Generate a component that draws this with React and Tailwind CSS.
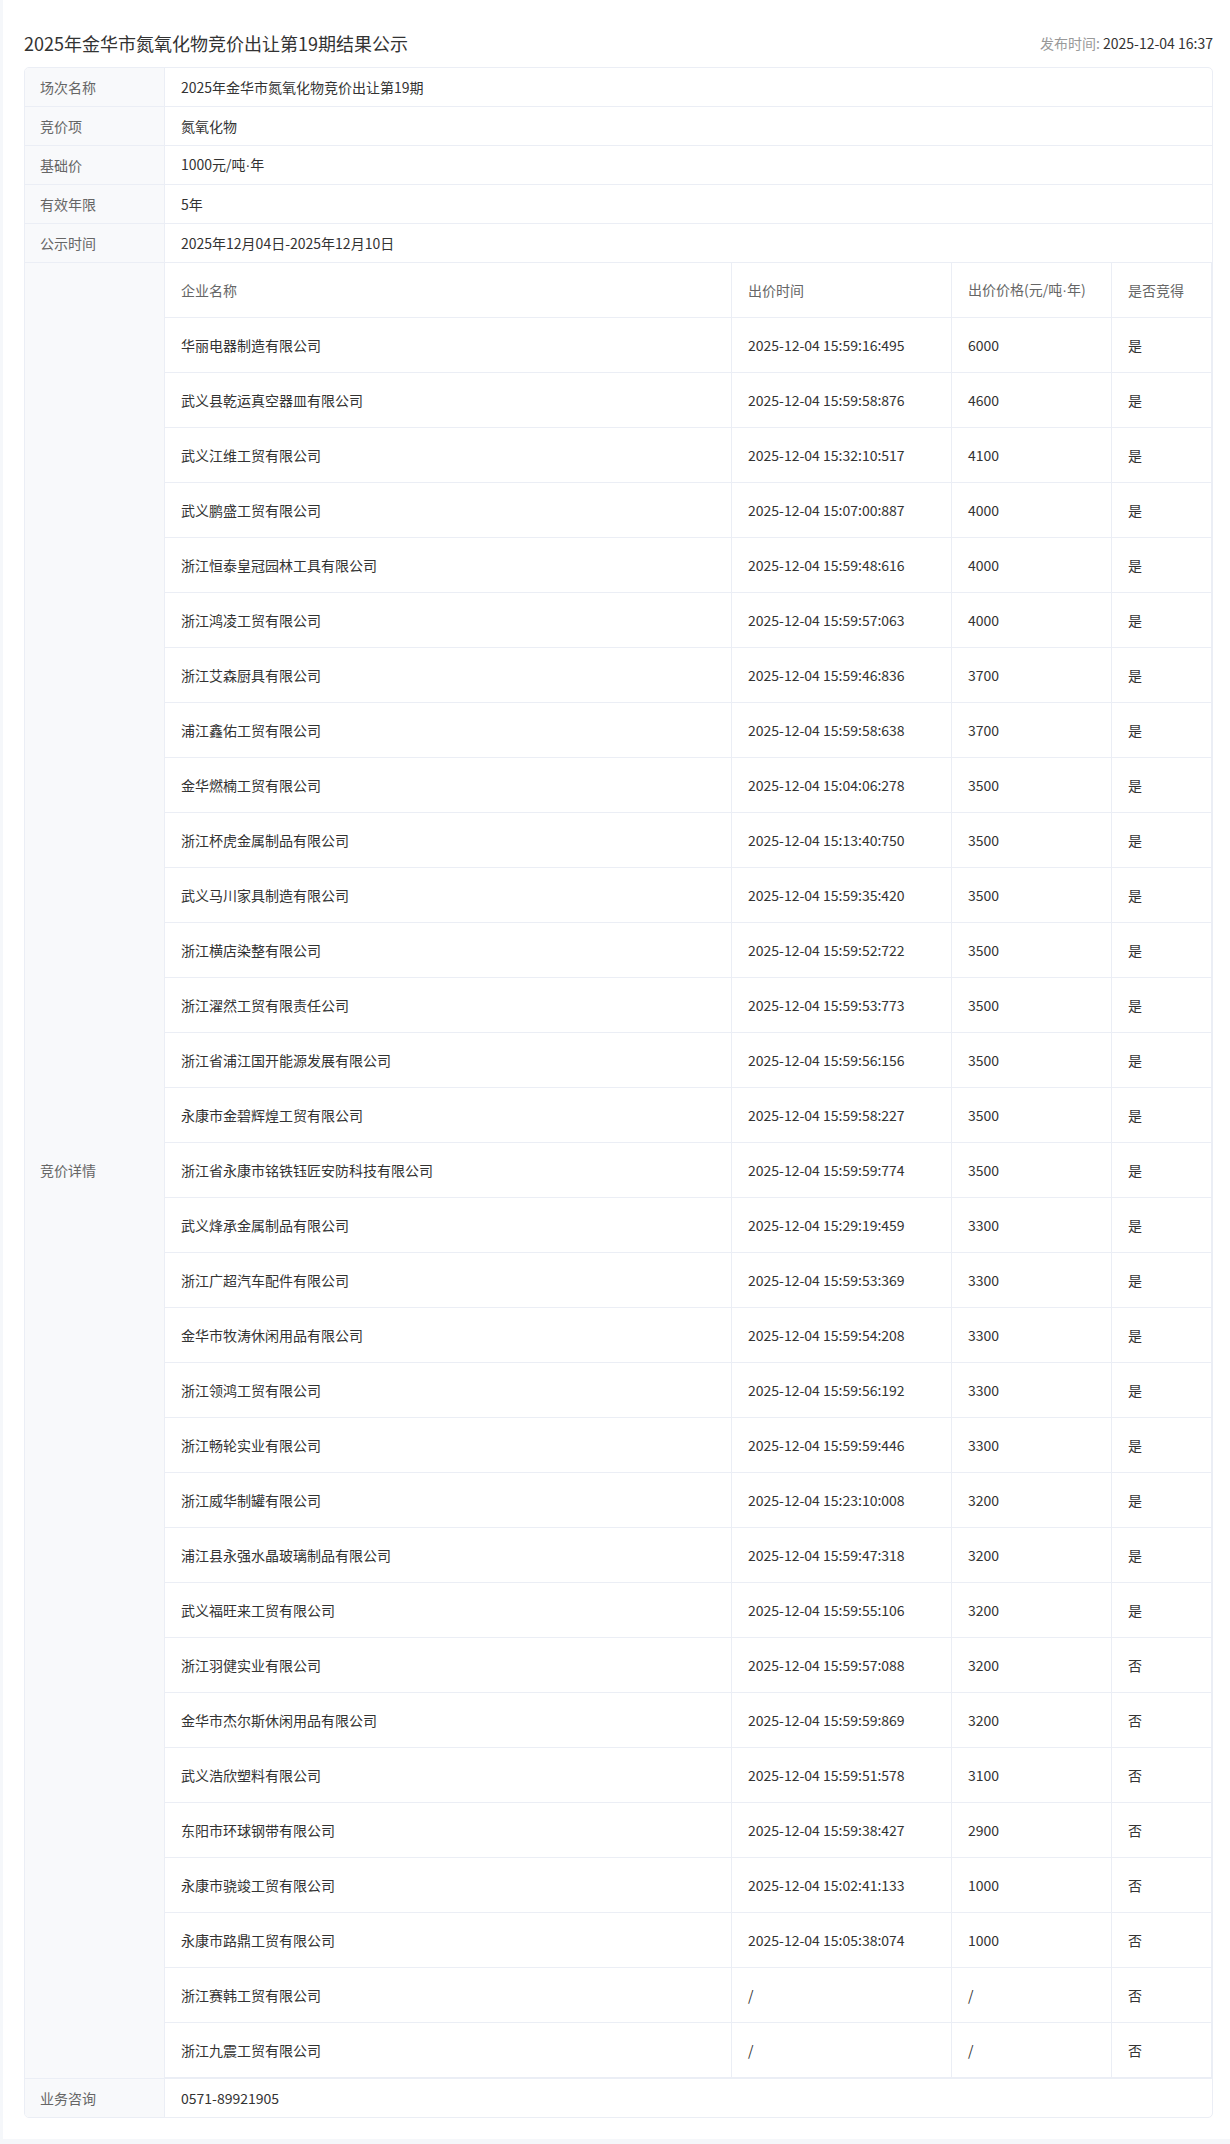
const bids = [
  ['华丽电器制造有限公司', '2025-12-04 15:59:16:495', '6000', '是'],
  ['武义县乾运真空器皿有限公司', '2025-12-04 15:59:58:876', '4600', '是'],
  ['武义江维工贸有限公司', '2025-12-04 15:32:10:517', '4100', '是'],
  ['武义鹏盛工贸有限公司', '2025-12-04 15:07:00:887', '4000', '是'],
  ['浙江恒泰皇冠园林工具有限公司', '2025-12-04 15:59:48:616', '4000', '是'],
  ['浙江鸿凌工贸有限公司', '2025-12-04 15:59:57:063', '4000', '是'],
  ['浙江艾森厨具有限公司', '2025-12-04 15:59:46:836', '3700', '是'],
  ['浦江鑫佑工贸有限公司', '2025-12-04 15:59:58:638', '3700', '是'],
  ['金华燃楠工贸有限公司', '2025-12-04 15:04:06:278', '3500', '是'],
  ['浙江杯虎金属制品有限公司', '2025-12-04 15:13:40:750', '3500', '是'],
  ['武义马川家具制造有限公司', '2025-12-04 15:59:35:420', '3500', '是'],
  ['浙江横店染整有限公司', '2025-12-04 15:59:52:722', '3500', '是'],
  ['浙江濯然工贸有限责任公司', '2025-12-04 15:59:53:773', '3500', '是'],
  ['浙江省浦江国开能源发展有限公司', '2025-12-04 15:59:56:156', '3500', '是'],
  ['永康市金碧辉煌工贸有限公司', '2025-12-04 15:59:58:227', '3500', '是'],
  ['浙江省永康市铭铁钰匠安防科技有限公司', '2025-12-04 15:59:59:774', '3500', '是'],
  ['武义烽承金属制品有限公司', '2025-12-04 15:29:19:459', '3300', '是'],
  ['浙江广超汽车配件有限公司', '2025-12-04 15:59:53:369', '3300', '是'],
  ['金华市牧涛休闲用品有限公司', '2025-12-04 15:59:54:208', '3300', '是'],
  ['浙江领鸿工贸有限公司', '2025-12-04 15:59:56:192', '3300', '是'],
  ['浙江畅轮实业有限公司', '2025-12-04 15:59:59:446', '3300', '是'],
  ['浙江威华制罐有限公司', '2025-12-04 15:23:10:008', '3200', '是'],
  ['浦江县永强水晶玻璃制品有限公司', '2025-12-04 15:59:47:318', '3200', '是'],
  ['武义福旺来工贸有限公司', '2025-12-04 15:59:55:106', '3200', '是'],
  ['浙江羽健实业有限公司', '2025-12-04 15:59:57:088', '3200', '否'],
  ['金华市杰尔斯休闲用品有限公司', '2025-12-04 15:59:59:869', '3200', '否'],
  ['武义浩欣塑料有限公司', '2025-12-04 15:59:51:578', '3100', '否'],
  ['东阳市环球钢带有限公司', '2025-12-04 15:59:38:427', '2900', '否'],
  ['永康市骁竣工贸有限公司', '2025-12-04 15:02:41:133', '1000', '否'],
  ['永康市路鼎工贸有限公司', '2025-12-04 15:05:38:074', '1000', '否'],
  ['浙江赛韩工贸有限公司', '/', '/', '否'],
  ['浙江九震工贸有限公司', '/', '/', '否'],
];

// narrow middle dot, the CJK font draws it full width
const Dot = () => <span className="font-['Liberation_Sans']">·</span>;

const info = [
  ['场次名称', '2025年金华市氮氧化物竞价出让第19期'],
  ['竞价项', '氮氧化物'],
  ['基础价', <>1000元/吨<Dot />年</>],
  ['有效年限', '5年'],
  ['公示时间', '2025年12月04日-2025年12月10日'],
];

function InfoRow({ label, children }) {
  return (
    <div className="grid grid-cols-[140px_1fr] border-b border-[#ebeef5]">
      <div className="flex items-center h-[38px] pl-[15px] bg-[#f8f9fb] border-r border-[#ebeef5] text-[#666]">
        {label}
      </div>
      <div className="flex items-center h-[38px] pl-[16px] text-[#333]">{children}</div>
    </div>
  );
}

function BidTable() {
  const cols = 'grid grid-cols-[567px_220px_160px_1fr] border-b border-[#ebeef5]';
  const cell = 'flex items-center h-[54px] pl-[16px] border-r border-[#ebeef5]';
  return (
    <div>
      <div className={cols}>
        <div className={`${cell} text-[#666]`}>企业名称</div>
        <div className={`${cell} text-[#666]`}>出价时间</div>
        <div className={`${cell} text-[#666]`}>
          <span>出价价格(元/吨<Dot />年)</span>
        </div>
        <div className={`${cell} text-[#666]`}>是否竞得</div>
      </div>
      {bids.map((b, i) => (
        <div key={i} className={cols}>
          <div className={`${cell} text-[#333]`}>{b[0]}</div>
          <div className={`${cell} text-[#333]`}>{b[1]}</div>
          <div className={`${cell} text-[#333]`}>{b[2]}</div>
          <div className={`${cell} text-[#333]`}>{b[3]}</div>
        </div>
      ))}
    </div>
  );
}

export default function App() {
  return (
    <div
      className="bg-[#f5f7fa] pl-[3px] pb-[6px] text-[14px]"
      style={{ fontFamily: '"Noto Sans CJK SC", "Noto Sans", sans-serif' }}
    >
      <div className="bg-white pl-[21px] pr-[17px] pb-[21px]">
        <div className="h-[67px] pt-[31px] flex justify-between items-start">
          <h1 className="text-[18px] leading-[24px] text-[#333]">
            2025年金华市氮氧化物竞价出让第19期结果公示
          </h1>
          <div className="leading-[24px]">
            <span className="text-[#999]">发布时间: </span>
            <span className="text-[#333]">2025-12-04 16:37</span>
          </div>
        </div>

        <div className="border border-[#ebeef5] rounded-[5px] overflow-hidden">
          {info.map(([l, v]) => (
            <InfoRow key={l} label={l}>
              <span>{v}</span>
            </InfoRow>
          ))}
          <div className="grid grid-cols-[140px_1fr] border-b border-[#ebeef5]">
            <div className="flex items-center pl-[15px] bg-[#f8f9fb] border-r border-[#ebeef5] text-[#666]">
              竞价详情
            </div>
            <BidTable />
          </div>
          <div className="grid grid-cols-[140px_1fr]">
            <div className="flex items-center h-[38px] pl-[15px] bg-[#f8f9fb] border-r border-[#ebeef5] text-[#666]">
              业务咨询
            </div>
            <div className="flex items-center h-[38px] pl-[16px] text-[#333]">0571-89921905</div>
          </div>
        </div>
      </div>
    </div>
  );
}
